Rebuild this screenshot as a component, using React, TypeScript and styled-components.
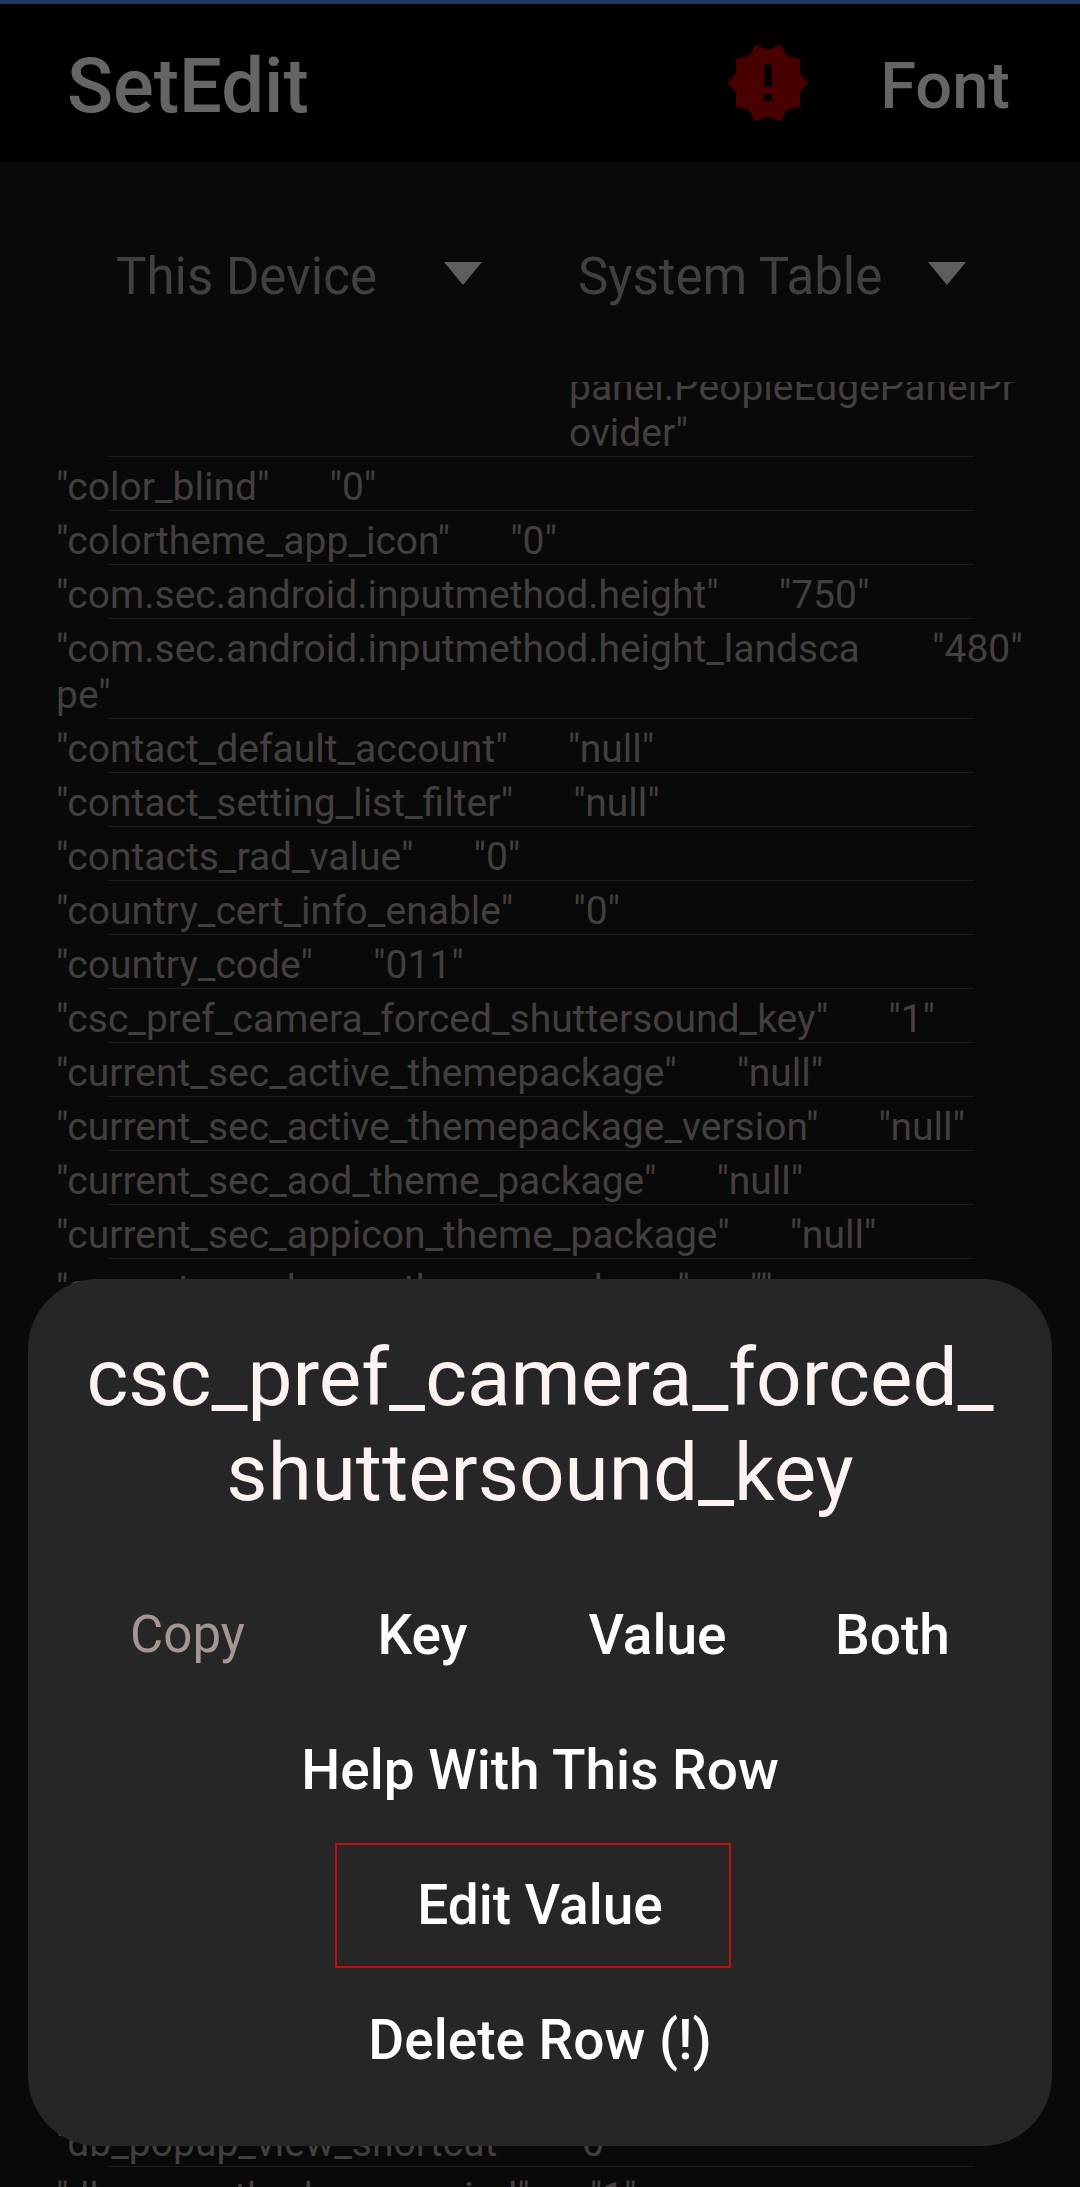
import React from "react";
import styled, { createGlobalStyle } from "styled-components";

const Global = createGlobalStyle`
  html, body { margin: 0; padding: 0; background: #090909; }
  body { font-family: Roboto, "Liberation Sans", sans-serif; }
`;

const Screen = styled.div`
  position: relative;
  width: 1080px;
  height: 2187px;
  overflow: hidden;
  background: #090909;
`;

const StatusStrip = styled.div`
  height: 4px;
  background: #1b3a63;
`;

const AppBar = styled.header`
  box-sizing: border-box;
  height: 158px;
  background: #000;
  display: flex;
  align-items: center;
  padding: 0 70px 0 67px;
`;

const Title = styled.h1`
  flex: 1;
  margin: 6px 0 0;
  font-size: 76px;
  font-weight: 500;
  color: #656565;
`;

const BadgeIcon = styled.svg`
  width: 88px;
  height: 88px;
  margin-right: 68px;
  display: block;
`;

const FontAction = styled.span`
  margin-top: 6px;
  font-size: 65px;
  font-weight: 500;
  color: #656565;
`;

const SpinnerBar = styled.div`
  height: 220px;
  box-sizing: border-box;
  display: flex;
  align-items: center;
  gap: 96px;
  padding: 0 0 0 116px;
`;

const Spinner = styled.div<{ $width: number }>`
  width: ${(p) => p.$width}px;
  display: flex;
  align-items: center;
  justify-content: space-between;
  font-size: 51px;
  line-height: 60px;
  color: #433f3f;
`;

const SpinnerLabel = styled.span`
  position: relative;
  top: 5px;
`;

const Caret = styled.span`
  width: 0;
  height: 0;
  border-left: 19px solid transparent;
  border-right: 19px solid transparent;
  border-top: 23px solid #5e5e5e;
  position: relative;
  top: 1px;
`;

const List = styled.div`
  height: 1805px;
  overflow: hidden;
`;

const Row = styled.div`
  position: relative;
  display: flex;
  align-items: flex-start;
  padding: 7px 0 1px 56px;
  font-size: 39px;
  line-height: 46px;
  color: #433f3f;
  &::after {
    content: "";
    position: absolute;
    left: 107px;
    width: 867px;
    bottom: 0;
    height: 1px;
    background: #1b1b1b;
  }
`;

const LeadRow = styled(Row)`
  margin-top: -25px;
  padding-left: 569px;
`;

const KeyText = styled.span<{ $width?: number }>`
  flex: none;
  ${(p) => (p.$width ? `width: ${p.$width}px; word-break: break-all;` : "")}
`;

const ValueText = styled.span`
  flex: none;
  margin-left: 60px;
`;

const LeadText = styled.span`
  width: 452px;
  word-break: break-all;
`;

const HiddenRows = styled.div`
  height: 800px;
`;

const Dialog = styled.section`
  position: absolute;
  left: 28px;
  top: 1279px;
  width: 1024px;
  height: 867px;
  box-sizing: border-box;
  padding: 52px 42px 0;
  background: #262626;
  border-radius: 70px;
  display: flex;
  flex-direction: column;
  align-items: center;
`;

const DialogTitle = styled.h2`
  margin: 0 0 51px;
  width: 100%;
  text-align: center;
  font-size: 80px;
  line-height: 95px;
  font-weight: 400;
  color: #fdf3f0;
  word-break: break-all;
`;

const CopyRow = styled.div`
  width: 100%;
  display: grid;
  grid-template-columns: repeat(4, 1fr);
  justify-items: center;
  align-items: center;
  margin-bottom: 10px;
`;

const CopyLabel = styled.span`
  font-size: 51px;
  color: #a59692;
`;

const Action = styled.button<{ $outlined?: boolean }>`
  flex: none;
  box-sizing: border-box;
  height: 125px;
  width: 396px;
  margin: ${(p) => (p.$outlined ? "1px 14px 9px 0" : "0 0 10px")};
  padding: ${(p) => (p.$outlined ? "0 0 2px 14px" : "0")};
  background: none;
  font-family: inherit;
  font-size: 55px;
  font-weight: 500;
  color: #fff;
  white-space: nowrap;
  display: flex;
  align-items: center;
  justify-content: center;
  border: ${(p) => (p.$outlined ? "2px solid #c01015" : "none")};
`;

const CopyAction = styled(Action)`
  width: auto;
  margin-bottom: 0;
`;

const rows: [string, string, number?][] = [
  ['"color_blind"', '"0"'],
  ['"colortheme_app_icon"', '"0"'],
  ['"com.sec.android.inputmethod.height"', '"750"'],
  ['"com.sec.android.inputmethod.height_landscape"', '"480"', 816],
  ['"contact_default_account"', '"null"'],
  ['"contact_setting_list_filter"', '"null"'],
  ['"contacts_rad_value"', '"0"'],
  ['"country_cert_info_enable"', '"0"'],
  ['"country_code"', '"011"'],
  ['"csc_pref_camera_forced_shuttersound_key"', '"1"'],
  ['"current_sec_active_themepackage"', '"null"'],
  ['"current_sec_active_themepackage_version"', '"null"'],
  ['"current_sec_aod_theme_package"', '"null"'],
  ['"current_sec_appicon_theme_package"', '"null"'],
  ['"current_sec_home_theme_package"', '""'],
];

const tailRows: [string, string][] = [
  ['"db_popup_view_shortcut"', '"0"'],
  ['"dlnas_method_screen_ind"', '"1"'],
];

const renderRow = ([key, value, width]: [string, string, number?]) => (
  <Row key={key}>
    <KeyText $width={width}>{key}</KeyText>
    <ValueText>{value}</ValueText>
  </Row>
);

export default function App() {
  return (
    <Screen>
      <Global />
      <StatusStrip />
      <AppBar>
        <Title>SetEdit</Title>
        <BadgeIcon viewBox="0 0 24 24">
          <path
            fill="#480000"
            d="M23 12l-2.44-2.78.34-3.68-3.61-.82-1.89-3.18L12 3 8.6 1.54 6.71 4.72l-3.61.81.34 3.68L1 12l2.44 2.78-.34 3.69 3.61.82 1.89 3.18L12 21l3.4 1.46 1.89-3.18 3.61-.82-.34-3.68L23 12zm-10 5h-2v-2h2v2zm0-4h-2V7h2v6z"
          />
        </BadgeIcon>
        <FontAction>Font</FontAction>
      </AppBar>
      <SpinnerBar>
        <Spinner $width={366}>
          <SpinnerLabel>This Device</SpinnerLabel>
          <Caret />
        </Spinner>
        <Spinner $width={388}>
          <SpinnerLabel>System Table</SpinnerLabel>
          <Caret />
        </Spinner>
      </SpinnerBar>
      <List>
        <LeadRow>
          <LeadText>panel.PeopleEdgePanelProvider"</LeadText>
        </LeadRow>
        {rows.map(renderRow)}
        <HiddenRows />
        {tailRows.map(renderRow)}
      </List>
      <Dialog>
        <DialogTitle>csc_pref_camera_forced_shuttersound_key</DialogTitle>
        <CopyRow>
          <CopyLabel>Copy</CopyLabel>
          <CopyAction>Key</CopyAction>
          <CopyAction>Value</CopyAction>
          <CopyAction>Both</CopyAction>
        </CopyRow>
        <Action>Help With This Row</Action>
        <Action $outlined>Edit Value</Action>
        <Action>Delete Row (!)</Action>
      </Dialog>
    </Screen>
  );
}
